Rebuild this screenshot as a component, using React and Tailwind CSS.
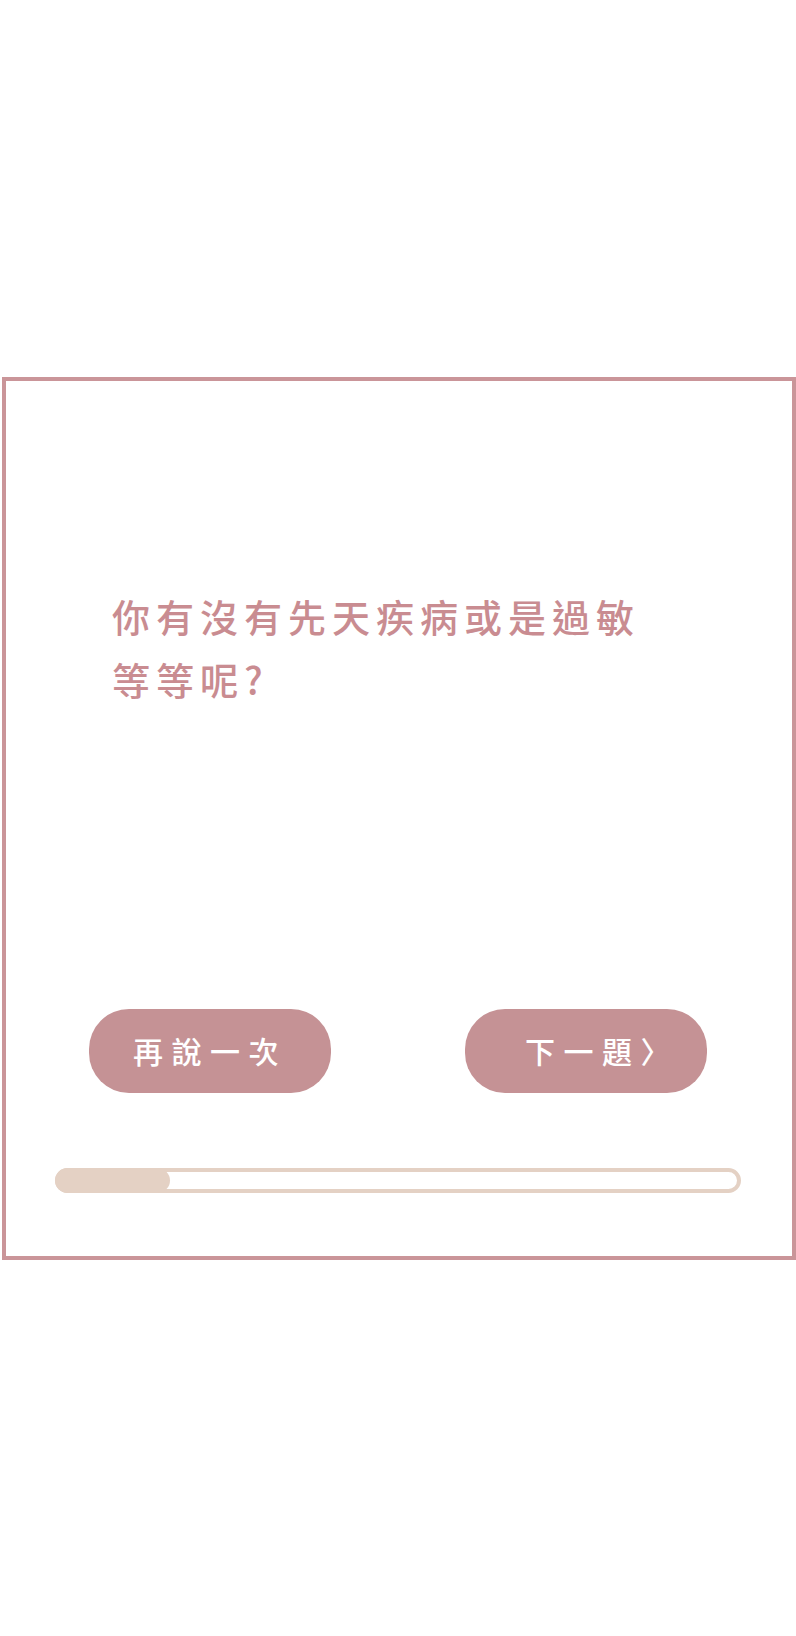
export default function App() {
  const font = { fontFamily: '"Noto Sans CJK TC", "Noto Sans", sans-serif' };
  return (
    <div className="w-[796px] h-[1636px] bg-white flex items-center" style={font}>
      <div className="ml-[2px] w-[794px] h-[883px] border-4 border-[#ca9599] flex flex-col">
        <div className="mt-[203px] pl-[106px] w-[660px] text-[38px] leading-[63px] tracking-[6px] font-medium text-[#c98c91]">
          你有沒有先天疾病或是過敏等等呢?
        </div>
        <div className="mt-auto flex justify-between pl-[83px] pr-[85px]">
          <button className="w-[242px] h-[84px] rounded-[40px] bg-[#c59295] text-white text-[30px] tracking-[8.5px] font-medium flex items-center justify-center">
            再說一次
          </button>
          <button className="w-[242px] h-[84px] rounded-[40px] bg-[#c59295] text-white text-[30px] tracking-[8.5px] font-medium flex items-center justify-center pl-[32px]">
            下一題〉
          </button>
        </div>
        <div className="mt-[75px] mb-[63px] ml-[49px] mr-[51px] h-[25px] rounded-full border-4 border-[#e4d1c4] relative">
          <div className="absolute -left-[4px] -top-[4px] h-[25px] w-[115px] rounded-full bg-[#e4d1c4]" />
        </div>
      </div>
    </div>
  );
}
